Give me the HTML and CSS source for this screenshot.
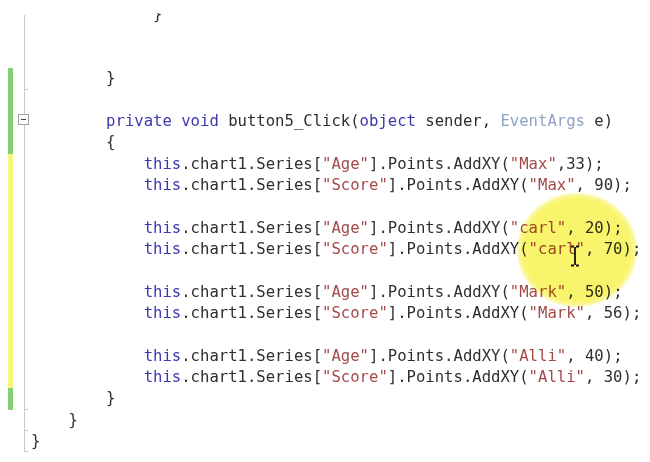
FILE: index.html
```html
<!DOCTYPE html>
<html>
<head>
<meta charset="utf-8">
<link rel="stylesheet" href="styles.css">
</head>
<body>
<div class="editor">
  <div class="row"><span class="chg"></span><span class="fold fold-top"></span><span class="code">             <span class="clip">}</span></span></div>
  <div class="row"><span class="chg"></span><span class="fold"></span><span class="code"></span></div>
  <div class="row"><span class="chg"></span><span class="fold"></span><span class="code"></span></div>
  <div class="row"><span class="chg green"></span><span class="fold tick"></span><span class="code">        }</span></div>
  <div class="row"><span class="chg green"></span><span class="fold"></span><span class="code"></span></div>
  <div class="row"><span class="chg green"></span><span class="fold"><span class="box"></span></span><span class="code">        <span class="kw">private</span> <span class="kw">void</span> button5_Click(<span class="kw">object</span> sender, <span class="ty">EventArgs</span> e)</span></div>
  <div class="row"><span class="chg green"></span><span class="fold"></span><span class="code">        {</span></div>
  <div class="row"><span class="chg yellow"></span><span class="fold"></span><span class="code">            <span class="kw">this</span>.chart1.Series[<span class="st">"Age"</span>].Points.AddXY(<span class="st">"Max"</span>,33);</span></div>
  <div class="row"><span class="chg yellow"></span><span class="fold"></span><span class="code">            <span class="kw">this</span>.chart1.Series[<span class="st">"Score"</span>].Points.AddXY(<span class="st">"Max"</span>, 90);</span></div>
  <div class="row"><span class="chg yellow"></span><span class="fold"></span><span class="code"></span></div>
  <div class="row"><span class="chg yellow"></span><span class="fold"></span><span class="code">            <span class="kw">this</span>.chart1.Series[<span class="st">"Age"</span>].Points.AddXY(<span class="st">"carl"</span>, 20);</span></div>
  <div class="row"><span class="chg yellow"></span><span class="fold"></span><span class="code">            <span class="kw">this</span>.chart1.Series[<span class="st">"Score"</span>].Points.AddXY(<span class="st">"carl"</span>, 70);</span></div>
  <div class="row"><span class="chg yellow"></span><span class="fold"></span><span class="code"></span></div>
  <div class="row"><span class="chg yellow"></span><span class="fold"></span><span class="code">            <span class="kw">this</span>.chart1.Series[<span class="st">"Age"</span>].Points.AddXY(<span class="st">"Mark"</span>, 50);</span></div>
  <div class="row"><span class="chg yellow"></span><span class="fold"></span><span class="code">            <span class="kw">this</span>.chart1.Series[<span class="st">"Score"</span>].Points.AddXY(<span class="st">"Mark"</span>, 56);</span></div>
  <div class="row"><span class="chg yellow"></span><span class="fold"></span><span class="code"></span></div>
  <div class="row"><span class="chg yellow"></span><span class="fold"></span><span class="code">            <span class="kw">this</span>.chart1.Series[<span class="st">"Age"</span>].Points.AddXY(<span class="st">"Alli"</span>, 40);</span></div>
  <div class="row"><span class="chg yellow"></span><span class="fold"></span><span class="code">            <span class="kw">this</span>.chart1.Series[<span class="st">"Score"</span>].Points.AddXY(<span class="st">"Alli"</span>, 30);</span></div>
  <div class="row"><span class="chg green"></span><span class="fold tick"></span><span class="code">        }</span></div>
  <div class="row"><span class="chg"></span><span class="fold tick"></span><span class="code">    }</span></div>
  <div class="row"><span class="chg"></span><span class="fold tick fold-end"></span><span class="code">}</span></div>
  <div class="spot"></div>
  <svg class="ibeam" width="10" height="22" viewBox="0 0 10 22"><path d="M1 1.5h3M6 1.5h3M5 2v18M1 20.5h3M6 20.5h3" stroke="#111" stroke-width="1.8" fill="none"/></svg>
</div>
</body>
</html>
```
FILE: styles.css
```css
html, body {
  margin: 0;
  padding: 0;
  background: #ffffff;
}
.editor {
  position: relative;
  width: 650px;
  height: 462px;
  overflow: hidden;
  padding-top: 4.3px;
  box-sizing: border-box;
  font-family: "DejaVu Sans Mono", "Liberation Mono", monospace;
  font-size: 15.6px;
  color: #2e2e2e;
  filter: blur(0.35px);
}
.row {
  display: flex;
  height: 21.33px;
  line-height: 21.33px;
}
.chg {
  width: 5px;
  margin-left: 8px;
  margin-right: 5px;
  flex: none;
}
.chg.green { background: #84d074; }
.chg.yellow { background: #f6f57c; }
.fold {
  position: relative;
  width: 12px;
  flex: none;
  margin-right: 1px;
  background: linear-gradient(to right, transparent 6px, #c9c9c9 6px, #c9c9c9 7px, transparent 7px);
}
.fold-top {
  background: linear-gradient(to bottom, #fff 11px, transparent 11px),
              linear-gradient(to right, transparent 6px, #c9c9c9 6px, #c9c9c9 7px, transparent 7px);
}
.tick::after {
  content: "";
  position: absolute;
  left: 6px;
  bottom: 0;
  width: 4px;
  height: 1px;
  background: #c9c9c9;
}
.box {
  position: absolute;
  left: 0;
  top: 3px;
  width: 11px;
  height: 11px;
  border: 1px solid #a0a0a0;
  background: #fff;
  box-sizing: border-box;
}
.box::after {
  content: "";
  position: absolute;
  left: 2px;
  top: 4px;
  width: 5px;
  height: 1px;
  background: #444;
}
.code {
  white-space: pre;
}
.kw { color: #3a38ae; }
.st { color: #a34a48; }
.ty { color: #8ea2c6; }
.clip {
  display: inline-block;
  clip-path: inset(42% 0 0 0);
}
.spot {
  position: absolute;
  left: 516px;
  top: 192px;
  width: 122px;
  height: 116px;
  border-radius: 50%;
  background: radial-gradient(closest-side, #f8f46c 88%, rgba(248, 244, 108, 0.6) 96%, rgba(248, 244, 108, 0) 100%);
  mix-blend-mode: multiply;
}
.ibeam {
  position: absolute;
  left: 570px;
  top: 245px;
}
```
